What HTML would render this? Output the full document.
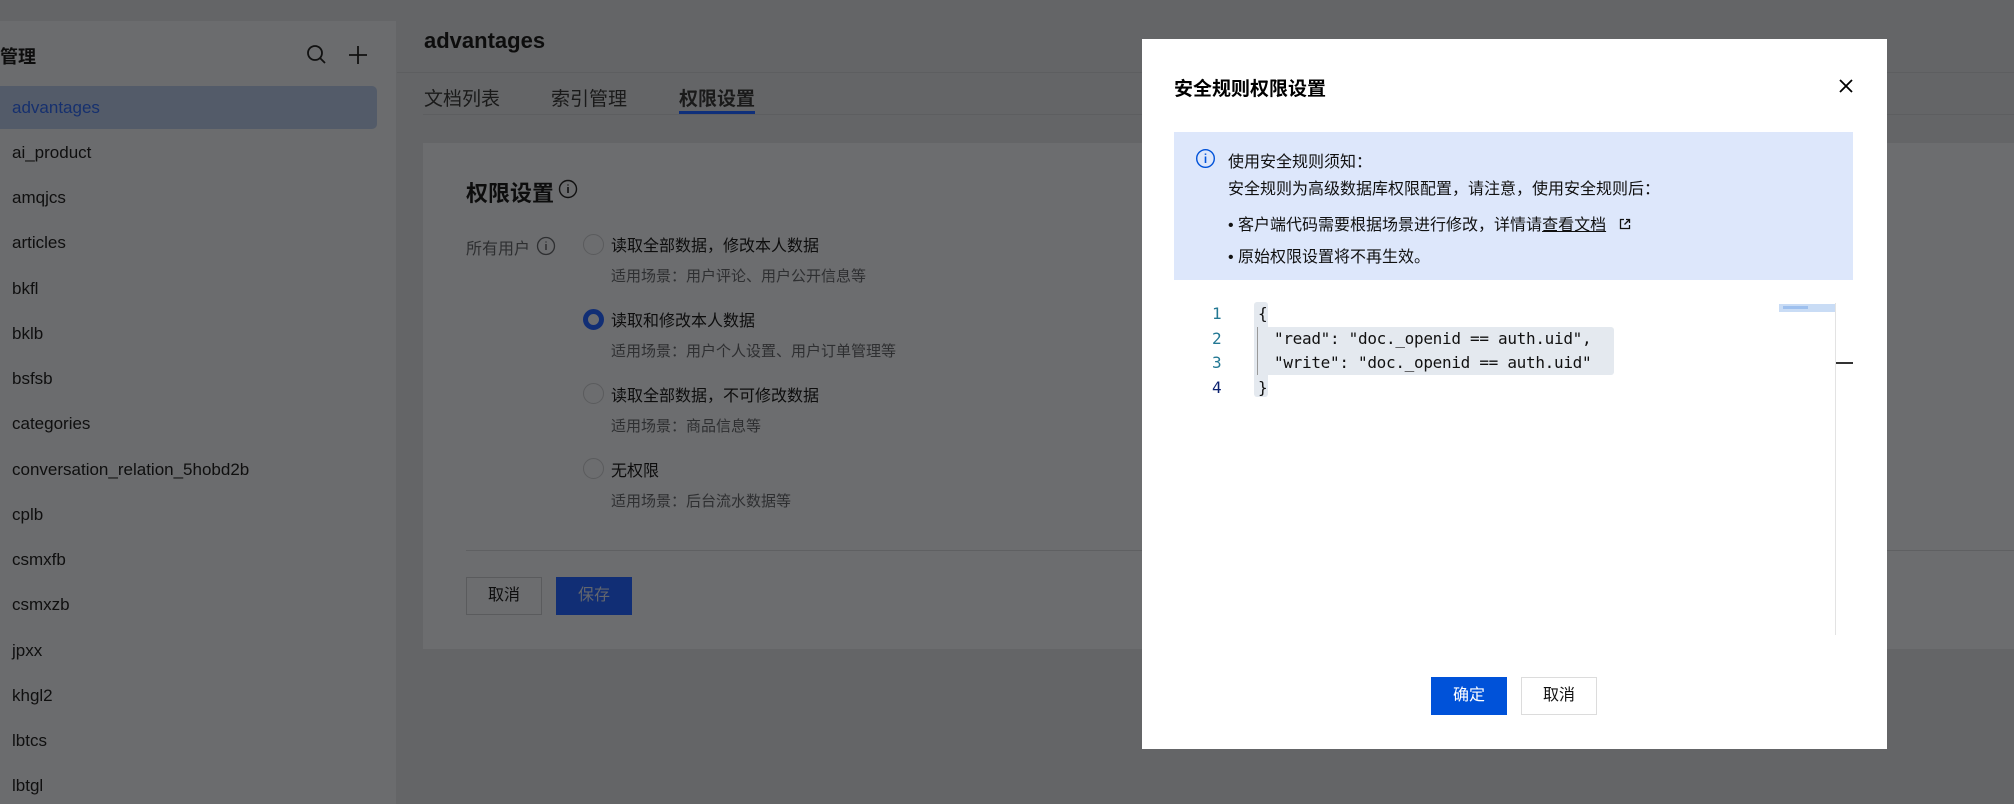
<!DOCTYPE html>
<html><head><meta charset="utf-8"><style>
*{margin:0;padding:0;box-sizing:border-box}
body{width:2014px;height:804px;overflow:hidden;background:#646567;font-family:"Liberation Sans","Noto Sans CJK SC",sans-serif;position:relative;color:#0d0d0d}
.abs{position:absolute}
.side{left:0;top:21px;width:396px;height:783px;background:#6b6c6e}
.item{position:absolute;left:12px;font-size:17px;color:#0f0f0f;line-height:20px}
.sel{left:0;top:86px;width:377px;height:43px;background:#535b69;border-radius:0 5px 5px 0}
.tab{font-size:19px;color:#1a1a1a;top:84px}
.card{left:423px;top:143px;width:1591px;height:506px;background:#6c6d6f}
.opt{font-size:16px;color:#0d0d0d;left:611px}
.desc{font-size:15px;color:#2e2f31;left:611px}
.radio{left:583px;width:21px;height:21px;border-radius:50%;border:1px solid #5a5b5d;background:#6c6d6f}
.modal{left:1142px;top:39px;width:745px;height:710px;background:#fff}
.code{font-family:"DejaVu Sans Mono","Liberation Mono",monospace;font-size:16px;color:#111;letter-spacing:-0.3px}
.ln{font-family:"DejaVu Sans Mono",monospace;font-size:16px;color:#237893;left:1212px}
</style></head><body>
<div class="abs side"></div>
<div class="abs" style="left:0;top:43px;font-size:18px;font-weight:bold;color:#0d0d0d">管理</div>
<svg class="abs" style="left:306px;top:44px" width="22" height="22" viewBox="0 0 22 22"><circle cx="9" cy="9" r="7" fill="none" stroke="#111" stroke-width="1.8"/><path d="M14 14l5 5" stroke="#111" stroke-width="1.8"/></svg>
<svg class="abs" style="left:347px;top:44px" width="22" height="22" viewBox="0 0 22 22"><path d="M11 2v18M2 11h18" stroke="#111" stroke-width="1.8"/></svg>
<div class="abs sel"></div>
<div class="item" style="top:98px;color:#16306e">advantages</div>
<div class="item" style="top:143px">ai_product</div>
<div class="item" style="top:188px">amqjcs</div>
<div class="item" style="top:233px">articles</div>
<div class="item" style="top:279px">bkfl</div>
<div class="item" style="top:324px">bklb</div>
<div class="item" style="top:369px">bsfsb</div>
<div class="item" style="top:414px">categories</div>
<div class="item" style="top:460px">conversation_relation_5hobd2b</div>
<div class="item" style="top:505px">cplb</div>
<div class="item" style="top:550px">csmxfb</div>
<div class="item" style="top:595px">csmxzb</div>
<div class="item" style="top:641px">jpxx</div>
<div class="item" style="top:686px">khgl2</div>
<div class="item" style="top:731px">lbtcs</div>
<div class="item" style="top:776px">lbtgl</div>

<div class="abs" style="left:424px;top:28px;font-size:22px;font-weight:bold">advantages</div>
<div class="abs" style="left:397px;top:72px;width:1617px;height:1px;background:#5d5e60"></div>
<div class="abs tab" style="left:424px">文档列表</div>
<div class="abs tab" style="left:551px">索引管理</div>
<div class="abs tab" style="left:679px;font-weight:bold">权限设置</div>
<div class="abs" style="left:423px;top:114px;width:1591px;height:1px;background:#5d5e60"></div>
<div class="abs" style="left:679px;top:111px;width:76px;height:3px;background:#0f2f7a"></div>

<div class="abs card"></div>
<div class="abs" style="left:466px;top:176px;font-size:22px;font-weight:bold">权限设置</div>
<svg class="abs" style="left:558px;top:179px" width="20" height="20"><circle cx="10" cy="10" r="8.5" fill="none" stroke="#111" stroke-width="1.4"/><path d="M10 8v6M10 5.5v1" stroke="#111" stroke-width="1.6"/></svg>
<div class="abs" style="left:466px;top:235px;font-size:16px;color:#2e2f31">所有用户</div>
<svg class="abs" style="left:536px;top:236px" width="20" height="20"><circle cx="10" cy="10" r="8.5" fill="none" stroke="#2e2f31" stroke-width="1.3"/><path d="M10 8v6M10 5.5v1" stroke="#2e2f31" stroke-width="1.5"/></svg>
<div class="abs radio" style="top:234px"></div>
<div class="abs radio" style="top:309px;border:5px solid #112e75;background:#6c6d6f"></div>
<div class="abs radio" style="top:383px"></div>
<div class="abs radio" style="top:458px"></div>
<div class="abs opt" style="top:232px">读取全部数据，修改本人数据</div>
<div class="abs desc" style="top:265px">适用场景：用户评论、用户公开信息等</div>
<div class="abs opt" style="top:307px">读取和修改本人数据</div>
<div class="abs desc" style="top:340px">适用场景：用户个人设置、用户订单管理等</div>
<div class="abs opt" style="top:382px">读取全部数据，不可修改数据</div>
<div class="abs desc" style="top:415px">适用场景：商品信息等</div>
<div class="abs opt" style="top:457px">无权限</div>
<div class="abs desc" style="top:490px">适用场景：后台流水数据等</div>
<div class="abs" style="left:466px;top:550px;width:1548px;height:1px;background:#5f6062"></div>
<div class="abs" style="left:466px;top:577px;width:76px;height:38px;border:1px solid #5a5b5d;font-size:16px;text-align:center;line-height:36px">取消</div>
<div class="abs" style="left:556px;top:577px;width:76px;height:38px;background:#112e75;color:#63666d;font-size:16px;text-align:center;line-height:38px">保存</div>

<div class="abs modal"></div>
<div class="abs" style="left:1174px;top:74px;font-size:19px;font-weight:bold;color:#000">安全规则权限设置</div>
<svg class="abs" style="left:1838px;top:78px" width="16" height="16"><path d="M2 2l12 12M14 2L2 14" stroke="#000" stroke-width="1.8"/></svg>
<div class="abs" style="left:1174px;top:132px;width:679px;height:148px;background:#dde7fb"></div>
<svg class="abs" style="left:1195px;top:148px" width="21" height="21"><circle cx="10.5" cy="10.5" r="8.8" fill="none" stroke="#0052d9" stroke-width="1.4"/><path d="M10.5 8.5v6.5M10.5 5.5v1.4" stroke="#0052d9" stroke-width="1.6"/></svg>
<div class="abs" style="left:1228px;top:148px;font-size:16px;color:#111">使用安全规则须知：</div>
<div class="abs" style="left:1228px;top:175px;font-size:16px;color:#111">安全规则为高级数据库权限配置，请注意，使用安全规则后：</div>
<div class="abs" style="left:1228px;top:211px;font-size:16px;color:#111">• 客户端代码需要根据场景进行修改，详情请<span style="text-decoration:underline">查看文档</span></div>
<svg class="abs" style="left:1619px;top:218px" width="12" height="12"><path d="M5 1.5H1.5v9h9V7M7 1.5h3.5V5M10.5 1.5L5.5 6.5" fill="none" stroke="#111" stroke-width="1.3"/></svg>
<div class="abs" style="left:1228px;top:243px;font-size:16px;color:#111">• 原始权限设置将不再生效。</div>

<div class="abs" style="left:1254px;top:302px;width:14px;height:95px;background:#e4e9ef;border-radius:3px"></div>
<div class="abs" style="left:1254px;top:327px;width:360px;height:48px;background:#e4e9ef;border-radius:3px"></div>
<div class="abs" style="left:1257px;top:327px;width:1px;height:48px;background:#999"></div>
<div class="abs ln" style="top:304px">1</div>
<div class="abs ln" style="top:329px">2</div>
<div class="abs ln" style="top:353px">3</div>
<div class="abs ln" style="top:378px;color:#0b216f">4</div>
<div class="abs code" style="left:1258px;top:304px">{</div>
<div class="abs code" style="left:1274px;top:329px">"read": "doc._openid == auth.uid",</div>
<div class="abs code" style="left:1274px;top:353px">"write": "doc._openid == auth.uid"</div>
<div class="abs code" style="left:1258px;top:378px">}</div>
<div class="abs" style="left:1779px;top:304px;width:56px;height:8px;background:#c9dcf5"></div>
<div class="abs" style="left:1783px;top:306px;width:25px;height:3px;background:#9ec0ee"></div>
<div class="abs" style="left:1835px;top:303px;width:1px;height:332px;background:#e3e3e3"></div>
<div class="abs" style="left:1836px;top:362px;width:17px;height:2px;background:#333"></div>

<div class="abs" style="left:1431px;top:677px;width:76px;height:38px;background:#0052d9;color:#fff;font-size:16px;text-align:center;line-height:38px">确定</div>
<div class="abs" style="left:1521px;top:677px;width:76px;height:38px;border:1px solid #dcdcdc;color:#111;font-size:16px;text-align:center;line-height:36px">取消</div>
</body></html>
